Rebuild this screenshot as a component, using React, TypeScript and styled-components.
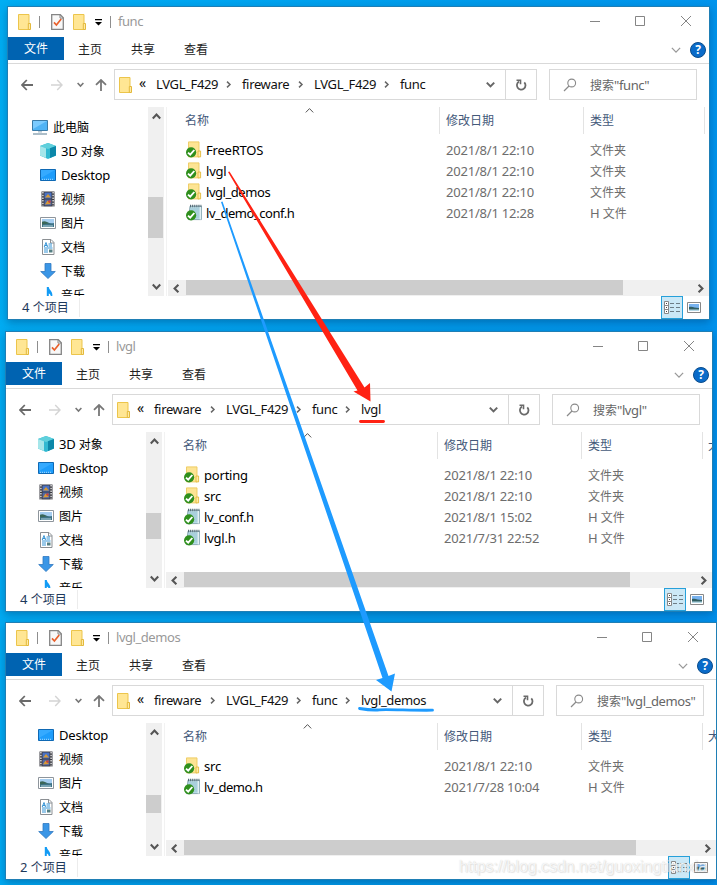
import React from "react";
import styled, { createGlobalStyle } from "styled-components";

const GlobalStyle = createGlobalStyle`
  * { box-sizing: border-box; }
  body { margin: 0; }
`;

const Desktop = styled.main`
  position: relative;
  width: 717px;
  height: 885px;
  overflow: hidden;
  background: linear-gradient(97deg, #00aef3 0%, #00a6f1 25%, #009aea 60%, #0091ee 100%);
  font-family: "Noto Sans", "Noto Sans CJK SC", sans-serif;
  font-size: 13px;
  letter-spacing: -0.2px;
  color: #111;
`;

const WindowFrame = styled.section<{ $x: number; $y: number; $w: number; $h: number }>`
  position: absolute;
  left: ${(p) => p.$x}px;
  top: ${(p) => p.$y}px;
  width: ${(p) => p.$w}px;
  height: ${(p) => p.$h}px;
  display: flex;
  flex-direction: column;
  background: #fff;
  box-shadow: 0 0 0 1px #1f7fb5, 0 3px 8px 1px rgba(0, 40, 90, 0.35);
`;

const TitleBar = styled.header`
  display: flex;
  align-items: center;
  height: 30px;
  flex: none;
  padding-left: 10px;
`;

const TitleSeparator = styled.i<{ $left: number; $right: number }>`
  width: 1px;
  height: 12px;
  margin: 0 ${(p) => p.$right}px 0 ${(p) => p.$left}px;
  background: #8e8e8e;
`;

const QuickIcons = styled.div`
  display: flex;
  align-items: center;
  gap: 9px;
`;

const TitleText = styled.span`
  flex: 1;
  color: #999;
  line-height: 28px;
  height: 30px;
  letter-spacing: -0.45px;
`;

const Caption = styled.div`
  display: flex;
  align-items: center;
  padding: 0 18px 2px 0;
`;

const Tabs = styled.nav`
  display: flex;
  height: 26px;
  flex: none;
  letter-spacing: 0;
`;

const FileTab = styled.div`
  width: 56px;
  height: 23px;
  background: #0063b1;
  color: #fff;
  font-size: 12px;
  line-height: 24px;
  text-align: center;
`;

const Tab = styled.div<{ $left: number }>`
  margin-left: ${(p) => p.$left}px;
  width: 24px;
  font-size: 12px;
  line-height: 25px;
  white-space: nowrap;
  color: #222;
`;

const TabTools = styled.div`
  display: flex;
  align-items: center;
  gap: 9px;
  height: 26px;
  margin-left: auto;
  padding-right: 3px;
`;

const NavBar = styled.div`
  display: flex;
  flex: none;
  height: 44px;
  padding: 5px 12px 0 13px;
  border-top: 1px solid #d9d9d9;
`;

const NavButtons = styled.div`
  display: flex;
  align-items: center;
  width: 93px;
  height: 31px;
  flex: none;
`;

const Address = styled.div`
  display: flex;
  align-items: center;
  flex: 1;
  height: 31px;
  border: 1px solid #d9d9d9;
  padding-left: 4px;
`;

const Guillemet = styled.span`
  width: 24px;
  padding-left: 7px;
  font-size: 14px;
  line-height: 26px;
  height: 29px;
`;

const Crumb = styled.span<{ $w: number }>`
  width: ${(p) => p.$w}px;
  height: 29px;
  white-space: nowrap;
  line-height: 28px;
  letter-spacing: -0.35px;
`;

const CrumbGap = styled.span`
  width: 25px;
  padding-right: 2px;
  display: flex;
  justify-content: center;
`;

const AddressDrop = styled.span`
  margin-left: auto;
  width: 29px;
  display: flex;
  justify-content: center;
`;

const Refresh = styled.span`
  display: flex;
  align-items: center;
  justify-content: center;
  width: 31px;
  height: 29px;
  border-left: 1px solid #d9d9d9;
`;

const Search = styled.div`
  display: flex;
  align-items: center;
  width: 148px;
  height: 31px;
  margin-left: 12px;
  padding-left: 13px;
  gap: 13px;
  border: 1px solid #d9d9d9;
  color: #666;
  white-space: nowrap;
  letter-spacing: -0.4px;
`;

const Body = styled.div`
  display: flex;
  flex: 1;
  min-height: 0;
`;

const Sidebar = styled.aside<{ $pad: number }>`
  width: 140px;
  flex: none;
  padding-top: ${(p) => p.$pad}px;
  overflow: hidden;
`;

const SideItem = styled.div<{ $root: boolean }>`
  display: flex;
  align-items: center;
  height: 24px;
  gap: 5px;
  padding: 0 0 1px ${(p) => (p.$root ? 24 : 32)}px;
  color: #000;
`;

const VScroll = styled.div`
  display: flex;
  flex-direction: column;
  justify-content: space-between;
  align-items: center;
  width: 16px;
  flex: none;
  background: #f0f0f0;
  padding: 5px 0;
  position: relative;
`;

const VThumb = styled.i<{ $top: number; $h: number }>`
  position: absolute;
  left: 0;
  top: ${(p) => p.$top}px;
  width: 15px;
  height: ${(p) => p.$h}px;
  background: #cdcdcd;
`;

const Listing = styled.div`
  display: flex;
  flex-direction: column;
  flex: 1;
  min-width: 0;
  margin-left: 2px;
  border-left: 1px solid #f2f2f2;
`;

const HeaderRow = styled.div`
  display: flex;
  height: 27px;
  flex: none;
  overflow: hidden;
  color: #44597a;
  font-size: 12px;
  line-height: 27px;
  letter-spacing: 0;
  position: relative;
`;

const HeaderCell = styled.span<{ $w: number; $pad: number }>`
  width: ${(p) => p.$w}px;
  padding-left: ${(p) => p.$pad}px;
  flex: none;
  border-right: 1px solid #e3e3e3;
`;

const HeaderTail = styled.span`
  padding-left: 5px;
  flex: none;
`;

const SortMark = styled.span`
  position: absolute;
  left: 138px;
  top: -1px;
  line-height: 0;
`;

const FileRows = styled.div`
  flex: 1;
  padding-top: 5px;
`;

const FileRow = styled.div`
  display: grid;
  grid-template-columns: 20px 240px 144px 1fr;
  align-items: center;
  height: 21px;
  padding-left: 19px;
  white-space: nowrap;
`;

const FileMeta = styled.span`
  color: #6d6d6d;
`;

const FileName = styled.span<{ $tight: boolean }>`
  color: #000;
  letter-spacing: ${(p) => (p.$tight ? -0.45 : -0.2)}px;
`;

const HScroll = styled.div`
  display: flex;
  align-items: center;
  height: 16px;
  flex: none;
  margin-left: 1px;
  padding: 0 4px;
  background: #f0f0f0;
`;

const HThumb = styled.i<{ $right: number }>`
  flex: 1;
  height: 15px;
  align-self: flex-start;
  margin-left: 5px;
  margin-right: ${(p) => p.$right}px;
  background: #cdcdcd;
`;

const StatusBar = styled.footer`
  display: flex;
  height: 23px;
  flex: none;
  align-items: center;
  padding-left: 14px;
  color: #1e395b;
  letter-spacing: 0;
`;

const StatusText = styled.span`
  width: 58px;
  height: 19px;
  line-height: 18px;
  white-space: nowrap;
  border-right: 1px solid #ececec;
`;

const ViewDetails = styled.span`
  display: flex;
  align-items: center;
  justify-content: center;
  width: 22px;
  height: 23px;
  margin-left: auto;
  margin-right: 4px;
  border: 1px solid #26a0da;
  background: #cbe8f6;
`;

const ViewLarge = styled.span`
  width: 22px;
  line-height: 0;
`;

const Cjk = styled.span`
  font-size: 12px;
  letter-spacing: 0;
`;

const Overlay = styled.svg`
  position: absolute;
  left: 0;
  top: 0;
`;

const Watermark = styled.span`
  position: absolute;
  left: 459px;
  top: 857px;
  font-family: "Liberation Sans", sans-serif;
  font-size: 16px;
  line-height: 20px;
  letter-spacing: -0.05px;
  color: rgba(255, 255, 255, 0.8);
  text-shadow: 0 0 1px rgba(130, 130, 130, 0.35), 1px 1px 1px rgba(140, 140, 140, 0.2);
  white-space: nowrap;
`;

/* Sets Chinese runs one pixel smaller than the Latin runs beside them. */
function Mixed({ text }: { text: string }) {
  const runs = text.split(/([\u4e00-\u9fff]+)/).filter(Boolean);
  return (
    <span>
      {runs.map((r, i) =>
        /[\u4e00-\u9fff]/.test(r) ? <Cjk key={i}>{r}</Cjk> : <React.Fragment key={i}>{r}</React.Fragment>
      )}
    </span>
  );
}

type Dir = "up" | "down" | "left" | "right";

function Chevron({ dir, size = 9, color = "#555", weight = 2.1 }: { dir: Dir; size?: number; color?: string; weight?: number }) {
  const turn = { up: 180, down: 0, left: 90, right: -90 }[dir];
  return (
    <svg width={size} height={size} viewBox="0 0 8 8">
      <path d="M.7 2.3 4 5.7 7.3 2.3" fill="none" stroke={color} strokeWidth={(weight * 8) / size} transform={`rotate(${turn} 4 4)`} />
    </svg>
  );
}

function FolderIcon() {
  return (
    <svg width="13" height="16" viewBox="0 0 13 16">
      <path d="M.5 .5h10.5v15H.5z" fill="#ffe694" stroke="#ecc54b" />
      <path d="M10.300 15.500V9.500h2.200v6z" fill="#ffeaa5" stroke="#e3b93c" />
    </svg>
  );
}

function PropertiesIcon() {
  return (
    <svg width="13" height="16" viewBox="0 0 13 16">
      <path d="M.7.7h8.6l3 3v11.6H.7z" fill="#f8f8f8" stroke="#858585" strokeWidth="1.3" />
      <path d="M9 .9v3.2h3.2" fill="none" stroke="#858585" />
      <path d="m3 8.4 2.4 2.6 4.8-6" fill="none" stroke="#e9602b" strokeWidth="1.7" />
    </svg>
  );
}

function SyncBadge() {
  return (
    <g>
      <circle cx="5.1" cy="11.3" r="5.1" fill="#2f8f1d" />
      <path d="M2 11.600 4.200 13.700 8.300 9" fill="none" stroke="#fff" strokeWidth="1.900" />
    </g>
  );
}

function FileIcon({ kind }: { kind: "folder" | "header" }) {
  return (
    <svg width="16" height="17" viewBox="0 0 16 17">
      {kind === "folder" ? (
        <>
          <path d="M2.500.9H13v15H2.500z" fill="#fde494" stroke="#ecc95f" strokeWidth=".9" />
          <path d="M12 15.900V10h2.600v5.900z" fill="#ffeaa5" stroke="#e3b93c" strokeWidth=".9" />
        </>
      ) : (
        <>
          <path d="M4 2.2h11.4v13.4H2.4z" fill="#b7dbe5" stroke="#7599a5" strokeWidth=".8" />
          <path d="M4.5 5h9M4.5 7h9M4.5 9h9M6 11h7.5M6 13h7.5" stroke="#8fbccb" strokeWidth=".7" />
          <path d="M4 2h11.4" stroke="#556a76" strokeWidth="2.6" strokeDasharray="1.1 1" />
          <path d="M14.3 3v12.4" stroke="#e9f4f7" strokeWidth="1.2" />
        </>
      )}
      <SyncBadge />
    </svg>
  );
}

type SideKind = "pc" | "cube" | "desktop" | "video" | "image" | "doc" | "download" | "music";

function SideIcon({ kind }: { kind: SideKind }) {
  return (
    <svg width="16" height="16" viewBox="0 0 16 16">
      {kind === "pc" && (
        <>
          <path d="M.5 1.5h15v10H.5z" fill="#4fb3f5" stroke="#3a7ba8" />
          <path d="M1 2h14L1 10z" fill="#7bcbff" />
          <path d="M6 12h4v1.6H6z" fill="#b9cad6" />
          <path d="M1 15h14" stroke="#7f99ab" strokeWidth="1.3" />
        </>
      )}
      {kind === "cube" && (
        <>
          <path d="M8 0l8 3v9.5L8 16l-8-3.500V3z" fill="#31b9d1" />
          <path d="M8 0l8 3-8 3-8-3z" fill="#5fd0dc" />
          <path d="M0 3l6 2.200V15L0 12.500z" fill="#a5e6ea" />
          <path d="M10 5.300L16 3v9.500L10 15z" fill="#0c87a9" />
        </>
      )}
      {kind === "desktop" && (
        <>
          <path d="M.5 2.500h15v11H.5z" fill="#1e9dfb" stroke="#0f69b4" />
          <path d="M1 3h14L1 11z" fill="#35aaff" />
          <path d="M2 12.300h12" stroke="#bfe4ff" strokeWidth=".9" strokeDasharray="1 1" />
        </>
      )}
      {kind === "video" && (
        <>
          <path d="M1.500.5h13v15h-13z" fill="#3b3b42" />
          <path d="M2.900 1v14.500M13.100 1v14.500" stroke="#f3f3f3" strokeWidth="1.300" strokeDasharray="1.500 1.200" />
          <path d="M4.500 1.500h7v6h-7z" fill="#4a72c4" />
          <path d="M4.500 8.500h7v6h-7z" fill="#5068a6" />
          <path d="M5 6.500 8 3l3 3.500zM5 13.500l2.500-4L11 13z" fill="#d79a35" />
          <circle cx="9.500" cy="10.500" r="1.300" fill="#cf4436" />
        </>
      )}
      {kind === "image" && (
        <>
          <path d="M.5 2.500h15v11H.5z" fill="#fff" stroke="#8e959c" />
          <path d="M2 4h12v8H2z" fill="#a5cdf0" />
          <path d="M2 8c3-2 6 1 12 0v4H2z" fill="#3e7387" />
          <path d="M2 6.800c3-1.500 5 .5 8 1.500L2 9.500z" fill="#3a6657" />
          <path d="M3 11h10" stroke="#b4d4dd" />
        </>
      )}
      {kind === "doc" && (
        <>
          <path d="M2.500.5h8.500l3 3v12H2.500z" fill="#fff" stroke="#8b8f93" />
          <path d="M10.500.5v3.500H14" fill="none" stroke="#8b8f93" />
          <path d="M8.500 5h3.500M8.500 7h3.500M4 9h8.500M4 11h4M4 13h4" stroke="#3593d4" />
          <path d="M4.200 8 6 3.500 7.500 8M4.800 6.500h2.500" fill="none" stroke="#3593d4" />
          <path d="M9 10.500h3.500v3H9z" fill="#547f83" />
        </>
      )}
      {kind === "download" && <path d="M5 .5h6v8h4.300L8 15.500.7 8.500H5z" fill="#3a96e6" stroke="#3078c0" strokeWidth=".8" />}
      {kind === "music" && <path d="M6.800 0h2c.2 3 3.800 4 3.600 8.500L11 11C11 8 10 7 8.800 6.500V16h-2z" fill="#129bf5" />}
    </svg>
  );
}

function NavArrow({ dir, color }: { dir: "left" | "right" | "up"; color: string }) {
  const turn = { left: 0, right: 180, up: 90 }[dir];
  return (
    <svg width="12" height="12" viewBox="0 0 12 12">
      <path d="M12 6H1.200M5.800 1 1 6l4.800 5" fill="none" stroke={color} strokeWidth={dir === "right" ? 1.400 : 1.800} transform={`rotate(${turn} 6 6)`} />
    </svg>
  );
}

const NavSlot = styled.span<{ $w: number }>`
  width: ${(p) => p.$w}px;
  display: flex;
  flex: none;
`;

function RefreshIcon() {
  return (
    <svg width="12" height="12" viewBox="0 0 12 12">
      <path d="M9.300 3.300A4.300 4.300 0 1 1 4 2.600" fill="none" stroke="#6a6a6a" strokeWidth="1.800" />
      <path d="M1.500 1.300h4v4" fill="none" stroke="#6a6a6a" strokeWidth="1.600" />
    </svg>
  );
}

function SearchIcon() {
  return (
    <svg width="14" height="14" viewBox="0 0 14 14">
      <circle cx="8.700" cy="5" r="3.900" fill="none" stroke="#8a8a8a" strokeWidth="1.100" />
      <path d="M6 8 1 13" stroke="#8a8a8a" strokeWidth="1.200" />
    </svg>
  );
}

function QuickDropIcon() {
  return (
    <svg width="7" height="7" viewBox="0 0 7 7">
      <path d="M0 0h7v1.200H0zM0 3h7L3.500 6.500z" fill="#000" />
    </svg>
  );
}

function CaptionButtons() {
  return (
    <svg width="103" height="12" viewBox="0 0 103 12">
      <path d="M2 6.500h10" stroke="#858585" />
      <path d="M47.500 1.500h9v9h-9z" fill="none" stroke="#858585" />
      <path d="m93 1 10 10M103 1 93 11" stroke="#858585" />
    </svg>
  );
}

const HelpMark = styled.span`
  width: 16px;
  height: 16px;
  border-radius: 50%;
  border: 1px solid #0a4c8b;
  background: #0a6bc9;
  color: #fff;
  font-size: 12px;
  font-weight: 700;
  line-height: 14px;
  text-align: center;
`;

interface Entry {
  name: string;
  date: string;
  kind: "folder" | "header";
}

interface ExplorerProps {
  x: number;
  y: number;
  w: number;
  h: number;
  title: string;
  crumbs: string[];
  side: SideKind[];
  sidePad: number;
  thumbTop: number;
  thumbHeight: number;
  hGap: number;
  sizeColumn: boolean;
  entries: Entry[];
}

const SIDE_LABELS: Record<SideKind, string> = {
  pc: "此电脑",
  cube: "3D 对象",
  desktop: "Desktop",
  video: "视频",
  image: "图片",
  doc: "文档",
  download: "下载",
  music: "音乐",
};

const CRUMB_WIDTHS: Record<string, number> = {
  LVGL_F429: 61,
  fireware: 47,
  func: 24,
  lvgl: 20,
  lvgl_demos: 66,
};

function Explorer(p: ExplorerProps) {
  return (
    <WindowFrame $x={p.x} $y={p.y} $w={p.w} $h={p.h}>
      <TitleBar>
        <FolderIcon />
        <TitleSeparator $left={8} $right={11} />
        <QuickIcons>
          <PropertiesIcon />
          <FolderIcon />
          <QuickDropIcon />
        </QuickIcons>
        <TitleSeparator $left={8} $right={7} />
        <TitleText>{p.title}</TitleText>
        <Caption>
          <CaptionButtons />
        </Caption>
      </TitleBar>
      <Tabs>
        <FileTab>文件</FileTab>
        <Tab $left={14}>主页</Tab>
        <Tab $left={29}>共享</Tab>
        <Tab $left={29}>查看</Tab>
        <TabTools>
          <Chevron dir="down" size={10} color="#999" weight={1.300} />
          <HelpMark>?</HelpMark>
        </TabTools>
      </Tabs>
      <NavBar>
        <NavButtons>
          <NavSlot $w={30}><NavArrow dir="left" color="#6a6a6a" /></NavSlot>
          <NavSlot $w={26}><NavArrow dir="right" color="#d4d4d4" /></NavSlot>
          <NavSlot $w={18}><Chevron dir="down" size={7} color="#777" weight={1.600} /></NavSlot>
          <NavArrow dir="up" color="#777" />
        </NavButtons>
        <Address>
          <FolderIcon />
          <Guillemet>«</Guillemet>
          {p.crumbs.map((c, i) => (
            <React.Fragment key={i}>
              {i > 0 && <CrumbGap><Chevron dir="right" size={7} color="#666" weight={1.500} /></CrumbGap>}
              <Crumb $w={CRUMB_WIDTHS[c]}>{c}</Crumb>
            </React.Fragment>
          ))}
          <AddressDrop><Chevron dir="down" size={9} color="#666" weight={2} /></AddressDrop>
          <Refresh><RefreshIcon /></Refresh>
        </Address>
        <Search>
          <SearchIcon />
          <Mixed text={`搜索"${p.title}"`} />
        </Search>
      </NavBar>
      <Body>
        <Sidebar $pad={p.sidePad}>
          {p.side.map((s) => (
            <SideItem key={s} $root={s === "pc"}>
              <SideIcon kind={s} />
              <Mixed text={SIDE_LABELS[s]} />
            </SideItem>
          ))}
        </Sidebar>
        <VScroll>
          <Chevron dir="up" />
          <VThumb $top={p.thumbTop} $h={p.thumbHeight} />
          <Chevron dir="down" />
        </VScroll>
        <Listing>
          <HeaderRow>
            <HeaderCell $w={273} $pad={18}>名称</HeaderCell>
            <HeaderCell $w={144} $pad={6}>修改日期</HeaderCell>
            <HeaderCell $w={121} $pad={6}>类型</HeaderCell>
            {p.sizeColumn && <HeaderTail>大小</HeaderTail>}
            <SortMark><Chevron dir="up" size={9} weight={1} /></SortMark>
          </HeaderRow>
          <FileRows>
            {p.entries.map((e) => (
              <FileRow key={e.name}>
                <FileIcon kind={e.kind} />
                <FileName $tight={e.name.includes("_")}>{e.name}</FileName>
                <FileMeta>{e.date}</FileMeta>
                <FileMeta><Mixed text={e.kind === "folder" ? "文件夹" : "H 文件"} /></FileMeta>
              </FileRow>
            ))}
          </FileRows>
          <HScroll>
            <Chevron dir="left" />
            <HThumb $right={p.hGap} />
            <Chevron dir="right" />
          </HScroll>
        </Listing>
      </Body>
      <StatusBar>
        <StatusText><Mixed text={`${p.entries.length} 个项目`} /></StatusText>
        <ViewDetails>
          <svg width="16" height="13" viewBox="0 0 16 13">
            <path d="M.5.5h4v12h-4zM.5 4.500h4M.5 8.500h4" fill="#fff" stroke="#888" />
            <path d="M2.500 2v1M2.500 6v1M2.500 10v1" stroke="#444" />
            <path d="M6 2.500h4m2 0h4M6 6.500h4m2 0h4M6 10.500h4m2 0h4" stroke="#6d7d86" />
          </svg>
        </ViewDetails>
        <ViewLarge>
          <svg width="14" height="11" viewBox="0 0 14 11">
            <path d="M.5.5h13v10H.5z" fill="#fff" stroke="#888" />
            <path d="M2 2h10v7H2z" fill="#78b2ee" />
            <path d="M2 5c4-1 5 1 10 1v3H2z" fill="#315f63" />
            <path d="M2 7.500h10V9H2z" fill="#b6d9e6" />
          </svg>
        </ViewLarge>
      </StatusBar>
    </WindowFrame>
  );
}

const SIDE: SideKind[] = ["pc", "cube", "desktop", "video", "image", "doc", "download", "music"];

const WINDOWS: ExplorerProps[] = [
  {
    x: 8, y: 7, w: 701, h: 312, title: "func",
    crumbs: ["LVGL_F429", "fireware", "LVGL_F429", "func"],
    side: SIDE, sidePad: 8, thumbTop: 90, thumbHeight: 41, hGap: 73, sizeColumn: false,
    entries: [
      { name: "FreeRTOS", date: "2021/8/1 22:10", kind: "folder" },
      { name: "lvgl", date: "2021/8/1 22:10", kind: "folder" },
      { name: "lvgl_demos", date: "2021/8/1 22:10", kind: "folder" },
      { name: "lv_demo_conf.h", date: "2021/8/1 12:28", kind: "header" },
    ],
  },
  {
    x: 6, y: 332, w: 706, h: 279, title: "lvgl",
    crumbs: ["fireware", "LVGL_F429", "func", "lvgl"],
    side: SIDE.slice(1), sidePad: 0, thumbTop: 81, thumbHeight: 26, hGap: 69, sizeColumn: true,
    entries: [
      { name: "porting", date: "2021/8/1 22:10", kind: "folder" },
      { name: "src", date: "2021/8/1 22:10", kind: "folder" },
      { name: "lv_conf.h", date: "2021/8/1 15:02", kind: "header" },
      { name: "lvgl.h", date: "2021/7/31 22:52", kind: "header" },
    ],
  },
  {
    x: 6, y: 623, w: 710, h: 256, title: "lvgl_demos",
    crumbs: ["fireware", "LVGL_F429", "func", "lvgl_demos"],
    side: SIDE.slice(2), sidePad: 0, thumbTop: 72, thumbHeight: 18, hGap: 67, sizeColumn: true,
    entries: [
      { name: "src", date: "2021/8/1 22:10", kind: "folder" },
      { name: "lv_demo.h", date: "2021/7/28 10:04", kind: "header" },
    ],
  },
];

export default function App() {
  return (
    <Desktop>
      <GlobalStyle />
      {WINDOWS.map((w) => (
        <Explorer key={w.title} {...w} />
      ))}
      <Overlay width="717" height="885" viewBox="0 0 717 885">
        <path d="M228 172 229.500 171.500 364.500 387.500 370 383 370.500 401.500 353.500 391.500 357.500 390.500z" fill="#ff2213" />
        <path d="M360.500 421.500h23" stroke="#ff2213" strokeWidth="2.800" strokeLinecap="round" />
        <path d="M221 202 222.500 201.500 388.500 676 395 673.500 391.500 691.500 376 680 382.500 678z" fill="#1e9bff" />
        <path d="M359.500 708.500c6 1 12 2 20 1.300s35 .8 53 .4" fill="none" stroke="#1e9bff" strokeWidth="2.800" strokeLinecap="round" />
      </Overlay>
      <Watermark>https://blog.csdn.net/guoxingtianxia</Watermark>
    </Desktop>
  );
}
